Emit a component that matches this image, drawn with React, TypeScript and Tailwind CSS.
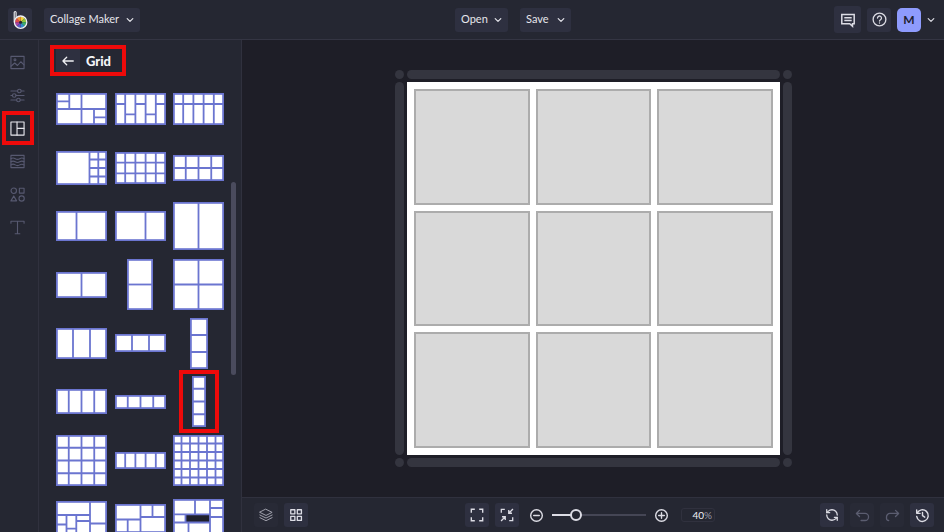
import { useState } from "react";
import type { ReactNode } from "react";
import { RefreshCcw } from "lucide-react";

type IconProps = { size?: number; children: ReactNode; stroke?: number; className?: string };

function Icon({ size = 16, children, stroke = 1.2, className = "" }: IconProps) {
  return (
    <svg
      width={size}
      height={size}
      viewBox="0 0 16 16"
      fill="none"
      stroke="currentColor"
      strokeWidth={stroke}
      strokeLinecap="round"
      strokeLinejoin="round"
      className={className}
      aria-hidden="true"
    >
      {children}
    </svg>
  );
}

function Chevron() {
  return (
    <svg width="8" height="8" viewBox="0 0 8 8" fill="none" stroke="currentColor" strokeWidth="1.2" strokeLinecap="round" strokeLinejoin="round" aria-hidden="true">
      <path d="M1.2 2.6 4 5.4 6.8 2.6" />
    </svg>
  );
}

const wheel = ["#f2d43a", "#8fc63f", "#3fae6a", "#2f8fd0", "#5b55c4", "#a943a8", "#e04a4a", "#f5923a"];

function Logo() {
  const point = (step: number) => {
    const angle = ((step * 45 - 90) * Math.PI) / 180;
    return `${12.6 + 5.6 * Math.cos(angle)} ${14.2 + 5.6 * Math.sin(angle)}`;
  };
  return (
    <svg width="24" height="24" viewBox="0 0 24 24" fill="none" aria-hidden="true">
      {wheel.map((color, i) => (
        <path key={color} d={`M12.6 14.2 ${point(i)}A5.6 5.6 0 0 1 ${point(i + 1)}z`} fill={color} />
      ))}
      <circle cx="12.6" cy="14.2" r="1.5" fill="#2b2333" />
      <path d="M6.200 13.800V4.600c0-1.500 1.900-1.500 1.900 0v4.800" stroke="#f3f3f6" strokeWidth="1.100" strokeLinecap="round" />
      <circle cx="12.600" cy="14.200" r="6.200" stroke="#f3f3f6" strokeWidth="1.300" />
    </svg>
  );
}

const tools: { name: string; icon: ReactNode; active?: boolean }[] = [
  {
    name: "Image Manager",
    icon: (
      <>
        <rect x="1" y="1.5" width="14" height="13" />
        <path d="M1 12 5 8.5l3 2.7 3.5-4L15 10.5" />
        <circle cx="5.3" cy="5" r="1" />
      </>
    ),
  },
  {
    name: "Customize",
    icon: (
      <>
        <path d="M1 3.2h7M12 3.2h3M1 8h1.5M6.5 8H15M1 12.8h6M11 12.8h4" />
        <circle cx="10" cy="3.2" r="1.9" />
        <circle cx="4.5" cy="8" r="1.9" />
        <circle cx="9" cy="12.8" r="1.9" />
      </>
    ),
  },
  {
    name: "Layouts",
    active: true,
    icon: (
      <>
        <rect x="1" y="1" width="14" height="14" />
        <path d="M7.5 1v14M7.5 7.8H15" />
      </>
    ),
  },
  {
    name: "Patterns",
    icon: (
      <>
        <rect x="1" y="1.5" width="14" height="13" />
        <path d="M1 5c1.5-1 3-1 4.6 0s3.2 1 4.8 0 3-1 4.6 0M1 8.300c1.5-1 3-1 4.6 0s3.2 1 4.8 0 3-1 4.6 0M1 11.600c1.5-1 3-1 4.6 0s3.2 1 4.8 0 3-1 4.6 0" />
      </>
    ),
  },
  {
    name: "Graphics",
    icon: (
      <>
        <circle cx="4" cy="4" r="2.9" />
        <rect x="10" y="1.3" width="5" height="5.2" />
        <path d="M4 9.5 7 14.8H1z" />
        <circle cx="12.4" cy="12.2" r="2.8" />
      </>
    ),
  },
  {
    name: "Text",
    icon: <path d="M1 3.5V1.300h14v2.200M8 1.300v13.400M5.500 14.700h5" />,
  },
];

type Layout = { w?: number; h: number; d: string; hole?: [number, number, number, number]; marked?: boolean };

const columns = (n: number, h: number, w = 51) =>
  Array.from({ length: n - 1 }, (_, i) => `M${((i + 1) * w) / n} 0V${h}`).join("");
const rows = (n: number, h: number, w = 51) =>
  Array.from({ length: n - 1 }, (_, i) => `M0 ${((i + 1) * h) / n}H${w}`).join("");

const layouts: Layout[] = [
  { h: 32, d: "M13.3 0V16M25.5 0V32M0 16H51M0 8.3H13.3M38 16V32M38 24.3H51" },
  { h: 32, d: columns(5, 32) + "M0 11H10.2M20.4 11H30.6M40.8 11H51M10.2 21.3H20.4M30.6 21.3H40.8" },
  { h: 32, d: columns(5, 32) + "M0 11H51" },
  { h: 34, d: "M33.5 0V34M42.3 0V34M33.5 8.5H51M33.5 17H51M33.5 25.5H51" },
  { h: 32, d: columns(5, 32) + rows(3, 32) },
  { h: 26, d: columns(4, 26) + rows(2, 26) },
  { h: 30, d: "M20.5 0V30" },
  { h: 30, d: "M30.5 0V30" },
  { h: 48, d: columns(2, 48) },
  { h: 26, d: columns(2, 26) },
  { w: 26, h: 51, d: rows(2, 51, 26) },
  { h: 51, d: columns(2, 51) + rows(2, 51) },
  { h: 31, d: columns(3, 31) },
  { h: 18, d: columns(3, 18) },
  { w: 18, h: 51, d: rows(3, 51, 18) },
  { h: 25, d: columns(4, 25) },
  { h: 14, d: columns(4, 14) },
  { w: 14, h: 51, d: rows(4, 51, 14), marked: true },
  { h: 51, d: columns(4, 51) + rows(4, 51) },
  { h: 17, d: columns(5, 17) },
  { h: 51, d: columns(6, 51) + rows(6, 51) },
  { h: 35, d: "M34 0V35M34 22.5H51M0 14H34M10.5 14V35M20.3 14V35M0 23.5H10.5M10.5 27.7H20.3M20.3 20H34" },
  { h: 29, d: "M25.5 0V29M0 15.5H25.5M12.7 15.5V29M37.5 0V13M25.5 13H51" },
  {
    h: 39,
    d: "M0 15.3H37M22 0V15.3M37 0V39M37 9H51M37 18H51M0 23.5H37M12.5 15.3V23.5M15.5 23.5V39",
    hole: [12.5, 15.3, 24.5, 8.2],
  },
];

function LayoutThumb({ w = 51, h, d, hole, marked, index }: Layout & { index: number }) {
  return (
    <button type="button" aria-label={`Grid layout ${index + 1}`} className="relative">
      <svg width={w} height={h} viewBox={`0 0 ${w} ${h}`} fill="none" stroke="#6b75d0" aria-hidden="true">
        <rect x="0.9" y="0.9" width={w - 1.8} height={h - 1.8} fill="#ffffff" strokeWidth="1.8" />
        {hole && <rect x={hole[0]} y={hole[1]} width={hole[2]} height={hole[3]} fill="#1f202c" stroke="none" />}
        <path d={d} strokeWidth="1.8" />
      </svg>
      {marked && <span className="absolute -inset-x-[13px] -inset-y-1.5 border-4 border-[#ee0a0a]" />}
    </button>
  );
}

const headerButton = "flex h-6 items-center rounded-[3px] bg-[#2e3040] px-1.5 text-[11px] text-[#e6e6ec]";
const squareButton = "flex size-6 items-center justify-center rounded-[3px] bg-[#2e3040] text-[#dcdce4]";
const quietButton = "flex size-6 items-center justify-center rounded-[3px] bg-[#282a36]";
const bar = "rounded-full bg-[#34353f]";

export default function App() {
  const [zoom, setZoom] = useState(22);

  return (
    <div className="flex h-screen flex-col overflow-hidden bg-[#252732] font-['Lato','Open_Sans',sans-serif] text-[#dcdce4]">
      <header className="flex h-10 shrink-0 items-center justify-between border-b border-[#343543] px-2">
        <div className="flex flex-1 items-center gap-3">
          <a href="#home" aria-label="Home" className="size-6 rounded-[3px] bg-[#2e3040]">
            <Logo />
          </a>
          <button type="button" className={`${headerButton} w-24 justify-between`}>
            Collage Maker
            <Chevron />
          </button>
        </div>
        <nav className="flex items-center gap-3 pl-[82px]">
          <button type="button" className={`${headerButton} w-[53px] justify-between`}>
            Open
            <Chevron />
          </button>
          <button type="button" className={`${headerButton} w-[51px] justify-between`}>
            Save
            <Chevron />
          </button>
        </nav>
        <div className="flex flex-1 items-center justify-end gap-1.5">
          <button type="button" aria-label="Feedback" className="flex size-[27px] items-center justify-center rounded-[3px] bg-[#2e3040]">
            <Icon stroke={1.5}>
              <path d="M1.8 2.5h12.4v9.3h-1.7v2.5l-2.8-2.5H1.8zM4.3 5.7h7.4M4.3 8.6h7.4" strokeLinejoin="miter" strokeLinecap="butt" />
            </Icon>
          </button>
          <button type="button" aria-label="Help" className={squareButton}>
            <Icon size={15} stroke={1.4}>
              <circle cx="8" cy="8" r="6.8" />
              <path d="M5.900 6.400a2.100 2.100 0 1 1 3.200 1.800c-.8.500-1.100.8-1.100 1.500M8 11.700v.1" />
            </Icon>
          </button>
          <button type="button" className="flex size-6 items-center justify-center rounded-[5px] bg-[#8e9bfd] text-xs font-bold text-[#1f2130]">
            M
          </button>
          <button type="button" aria-label="Account menu" className="pr-px">
            <Chevron />
          </button>
        </div>
      </header>

      <div className="flex min-h-0 flex-1">
        <aside className="flex w-[39px] shrink-0 flex-col items-center border-r border-[#30313e] pt-1.5 pr-[3px]">
          {tools.map((tool) => (
            <button
              key={tool.name}
              type="button"
              aria-label={tool.name}
              className={`relative flex h-[33px] w-8 shrink-0 items-center justify-center ${tool.active ? "text-[#e6e6ec]" : "text-[#575970]"}`}
            >
              <Icon size={15}>{tool.icon}</Icon>
              {tool.active && <span className="absolute inset-x-0 -top-px bottom-0 border-4 border-[#ee0a0a]" />}
            </button>
          ))}
        </aside>

        <section className="relative w-[203px] shrink-0 overflow-hidden border-r border-[#30313e] pt-[5px]">
          <div className="ml-[11px] flex h-[31px] w-[76px] items-stretch border-4 border-[#ee0a0a]">
            <button type="button" aria-label="Back" className="ml-0.5 flex w-6 items-center justify-center bg-[#2e3040] pt-px text-[#f0f0f4]">
              <Icon size={14} stroke={1.5}>
                <path d="M14 8H2.200M6.500 3.700 2.200 8l4.300 4.300" />
              </Icon>
            </button>
            <h1 className="flex items-center pt-0.5 pl-1.5 text-[13px] font-black text-[#f4f4f7]">Grid</h1>
          </div>
          <div className="mx-[17px] mt-1 grid h-[468px] w-[168px] grid-cols-[51px_51px_51px] grid-rows-8 place-items-center justify-between">
            {layouts.map((layout, index) => (
              <LayoutThumb key={index} {...layout} index={index} />
            ))}
          </div>
          <div className="absolute top-[142px] right-[5px] h-[193px] w-[5px] rounded-full bg-[#4a4b5d]" />
        </section>

        <div className="flex min-w-0 flex-1 flex-col">
          <main className="flex min-h-0 flex-1 items-center justify-center bg-[#1e1e27] pl-px">
            <div className="grid grid-cols-[9px_373px_9px] grid-rows-[9px_373px_9px] gap-[3px]">
              <span className={bar} />
              <span className={bar} />
              <span className={bar} />
              <span className={bar} />
              <div className="grid grid-cols-3 grid-rows-3 gap-1.5 bg-white p-[7px]">
                {Array.from({ length: 9 }, (_, i) => (
                  <div key={i} className="border-2 border-[#acacac] bg-[#d9d9d9]" />
                ))}
              </div>
              <span className={bar} />
              <span className={bar} />
              <span className={bar} />
              <span className={bar} />
            </div>
          </main>

          <footer className="flex h-[35px] shrink-0 items-center border-t border-[#30313e] pr-1.5">
            <div className="flex flex-1 gap-1.5">
              <button type="button" aria-label="Layers" className={`${quietButton} ml-3 text-[#a3a4b0]`}>
                <Icon size={14} stroke={1.1}>
                  <path d="M8 1.500 15 5 8 8.500 1 5zM1 8l7 3.500L15 8M1 11l7 3.500 7-3.500" />
                </Icon>
              </button>
              <button type="button" aria-label="Grid view" className={squareButton}>
                <Icon size={14} stroke={1.5}>
                  <path d="M2 2h4.700v4.700H2zM9.500 2h4.700v4.700H9.500zM2 9.500h4.700v4.700H2zM9.500 9.500h4.700v4.700H9.500z" />
                </Icon>
              </button>
            </div>

            <div className="flex w-[250px] items-center">
              <button type="button" aria-label="Fill screen" className={squareButton}>
                <Icon size={14} stroke={1.6}>
                  <path d="M1.500 5.500v-4h4M10.500 1.500h4v4M14.500 10.500v4h-4M5.500 14.500h-4v-4" strokeLinecap="butt" strokeLinejoin="miter" />
                </Icon>
              </button>
              <button type="button" aria-label="Fit to screen" className={`${squareButton} ml-1.5`}>
                <Icon size={14} stroke={1.5}>
                  <path d="M1.500 5.500v-4h4M14.500 10.500v4h-4M14.800 1.200 10 6M10 2.300V6h3.700M1.200 14.800 6 10M2.300 10H6v3.700" strokeLinecap="butt" strokeLinejoin="miter" />
                </Icon>
              </button>
              <button type="button" aria-label="Zoom out" className="ml-2.5">
                <Icon size={15} stroke={1.5}>
                  <circle cx="8" cy="8" r="6.2" />
                  <path d="M5 8h6" />
                </Icon>
              </button>
              <input
                type="range"
                aria-label="Zoom"
                min={0}
                max={100}
                value={zoom}
                onChange={(e) => setZoom(Number(e.target.value))}
                className="ml-2 h-3 w-[94px] appearance-none bg-linear-to-r from-[#dcdce4] from-25% to-[#454655] to-25% bg-[length:100%_2px] bg-center bg-no-repeat [&::-webkit-slider-thumb]:size-3 [&::-webkit-slider-thumb]:appearance-none [&::-webkit-slider-thumb]:rounded-full [&::-webkit-slider-thumb]:border-2 [&::-webkit-slider-thumb]:border-[#dcdce4] [&::-webkit-slider-thumb]:bg-[#252732]"
              />
              <button type="button" aria-label="Zoom in" className="ml-2">
                <Icon size={15} stroke={1.5}>
                  <circle cx="8" cy="8" r="6.2" />
                  <path d="M5 8h6M8 5v6" />
                </Icon>
              </button>
              <label className="ml-auto flex h-3.5 w-[34px] items-center justify-end rounded-[3px] border border-[#30313e] pr-0.5 text-[10px] leading-none">
                <input type="text" defaultValue="40" aria-label="Zoom percent" className="w-4 min-w-0 bg-transparent text-right text-[#f0f0f4]" />
                <span className="text-[#9a9bab]">%</span>
              </label>
            </div>

            <div className="flex flex-1 justify-end gap-1.5">
              <button type="button" aria-label="Reset" className={squareButton}>
                <RefreshCcw size={14} strokeWidth={2.2} />
              </button>
              <button type="button" aria-label="Undo" className={`${quietButton} text-[#5b5d70]`}>
                <Icon size={15} stroke={1.4}>
                  <path d="M4.800 2.500 1.500 5.800l3.300 3.300M1.500 5.800h9.200a3.700 3.700 0 0 1 0 7.500H6.500" />
                </Icon>
              </button>
              <button type="button" aria-label="Redo" className={`${quietButton} text-[#5b5d70]`}>
                <Icon size={15} stroke={1.4}>
                  <path d="m11.200 2.500 3.300 3.300-3.300 3.300M14.500 5.800H5.300a3.700 3.700 0 0 0-3.700 3.700v1.500c0 1.300 1 2.300 2.300 2.300" />
                </Icon>
              </button>
              <button type="button" aria-label="History" className={`${squareButton} mr-1`}>
                <Icon size={15} stroke={1.5}>
                  <path d="M2.300 5.500A6.200 6.200 0 1 1 1.800 9M1.800 2v3.700h3.700M8 4.800V8.200l2.400 1.600" />
                </Icon>
              </button>
            </div>
          </footer>
        </div>
      </div>
    </div>
  );
}
